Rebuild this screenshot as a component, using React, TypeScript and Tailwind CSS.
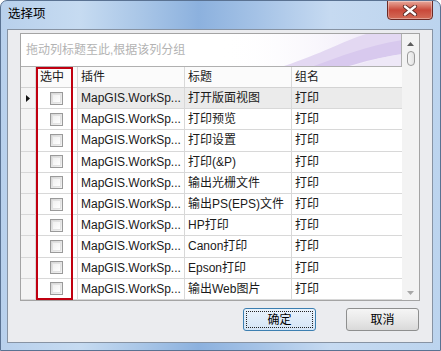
import React from "react";

const rows = [
  "打开版面视图",
  "打印预览",
  "打印设置",
  "打印(&P)",
  "输出光栅文件",
  "输出PS(EPS)文件",
  "HP打印",
  "Canon打印",
  "Epson打印",
  "输出Web图片",
];

const FONT = { fontFamily: "'Liberation Sans', 'Noto Sans CJK SC', sans-serif" };

function CheckBox() {
  return (
    <div className="w-[13px] h-[13px] border border-[#9a9a9a] bg-gradient-to-br from-[#d4d4d4] to-[#f4f4f4] flex items-center justify-center">
      <div className="w-[9px] h-[9px] bg-gradient-to-br from-[#f0f0f0] to-white border border-[#e2e2e2]" />
    </div>
  );
}

export default function App() {
  return (
    <div
      className="w-[441px] h-[351px] relative overflow-hidden rounded-t-[7px] border border-[#5a7292] flex flex-col text-[12px] text-[#1a1a1a]"
      style={{
        ...FONT,
        background:
          "linear-gradient(90deg, #b8d0ec 0%, #c6dbf1 18%, #a9c6e7 32%, #8cb1de 45%, #a4c2e6 58%, #c6daf1 75%, #bcd4ee 100%)",
      }}
    >
      {/* title bar */}
      <div className="h-[28px] flex items-center pl-[7px] pb-[1px] shrink-0">
        <span className="text-[12.5px] text-black leading-none">选择项</span>
      </div>
      {/* close button */}
      <div className="absolute top-[-1px] right-[7px] w-[46px] h-[20px] rounded-b-[4px] border border-[#6b2a25] bg-gradient-to-b from-[#e7a99d] via-[#c9483a] to-[#d36c58] flex items-center justify-center shadow-[inset_0_0_0_1px_rgba(255,255,255,0.35)]">
        <svg width="16" height="11" viewBox="0 0 16 11">
          <path d="M3 1.5 L13 9.5 M13 1.5 L3 9.5" stroke="#5a2a26" strokeWidth="4.2" strokeLinecap="round" />
          <path d="M3 1.5 L13 9.5 M13 1.5 L3 9.5" stroke="#ffffff" strokeWidth="2.4" strokeLinecap="round" />
        </svg>
      </div>

      {/* client area */}
      <div className="ml-[6px] mr-[7px] h-[314px] border border-[#8793a3] bg-[#ebecef] flex flex-col pt-[3px] px-[12px] shrink-0">
        {/* grid */}
        <div className="w-[400px] h-[268px] border border-[#a4a4a4] bg-white flex relative">
          <div className="w-[381px] flex flex-col relative">
            {/* group panel */}
            <div className="h-[33px] border-r border-b border-[#b0b0b0] relative overflow-hidden flex items-center pl-[5px] bg-white">
              <svg className="absolute left-0 top-0" width="381" height="33" viewBox="0 0 381 33">
                <defs>
                  <linearGradient id="g1" x1="0" y1="0" x2="1" y2="0">
                    <stop offset="0" stopColor="#ffffff" stopOpacity="0" />
                    <stop offset="1" stopColor="#e9e1f5" />
                  </linearGradient>
                </defs>
                <rect x="200" y="0" width="181" height="33" fill="url(#g1)" />
                <path d="M260 33 C300 20 320 8 345 0 L381 0 L381 10 C350 15 320 25 305 33 Z" fill="#e3d8f2" />
                <path d="M290 33 C320 22 345 12 381 6 L381 20 C360 23 340 28 325 33 Z" fill="#d8c9ee" />
                <path d="M330 33 C350 26 365 22 381 20 L381 33 Z" fill="#eee8f7" />
              </svg>
              <span className="relative text-[#b3b3b3] text-[12px]">拖动列标题至此,根据该列分组</span>
            </div>
            {/* header */}
            <div className="h-[21px] flex border-b border-[#d3d3d3] bg-[#fbfbfb]">
              <div className="w-[15px] border-r border-[#d8d8d8] bg-[#f4f4f4]" />
              <div className="w-[42px] border-r border-[#d8d8d8] pl-[4px] flex items-center">选中</div>
              <div className="w-[107px] border-r border-[#d8d8d8] pl-[3px] flex items-center">插件</div>
              <div className="w-[107px] border-r border-[#d8d8d8] pl-[3px] flex items-center">标题</div>
              <div className="w-[110px] pl-[3px] flex items-center">组名</div>
            </div>
            {/* rows */}
            {rows.map((t, i) => (
              <div
                key={i}
                className={`h-[21.2px] flex border-b border-[#d8d8d8] ${i === 0 ? "bg-[#ebebeb]" : "bg-white"}`}
              >
                <div className="w-[15px] border-r border-[#d8d8d8] bg-[#f4f4f4] flex items-center justify-center">
                  {i === 0 && (
                    <svg width="4" height="7" viewBox="0 0 4 7">
                      <path d="M0 0 L4 3.5 L0 7 Z" fill="#111" />
                    </svg>
                  )}
                </div>
                <div className="w-[42px] border-r border-[#d8d8d8] flex items-center justify-center bg-white">
                  <CheckBox />
                </div>
                <div className="w-[107px] border-r border-[#d8d8d8] pl-[3px] flex items-center whitespace-nowrap overflow-hidden">
                  MapGIS.WorkSp...
                </div>
                <div className="w-[107px] border-r border-[#d8d8d8] pl-[3px] flex items-center whitespace-nowrap overflow-hidden">
                  {t}
                </div>
                <div className="w-[110px] pl-[3px] flex items-center">打印</div>
              </div>
            ))}
            {/* red annotation box */}
            <div className="absolute left-[15px] top-[33px] w-[37px] h-[233px] border-2 border-[#c00010]" />
          </div>
          {/* scrollbar */}
          <div className="w-[17px] bg-[#f3f3f3] flex flex-col items-center">
            <div className="h-[17px] flex items-center justify-center mt-[1px]">
              <svg width="7" height="4" viewBox="0 0 7 4">
                <path d="M0 4 L3.5 0 L7 4 Z" fill="#5c5c5c" />
              </svg>
            </div>
            <div className="w-[8px] h-[15px] mt-[-1px] rounded-full border border-[#9a9a9a] bg-gradient-to-r from-[#f6f6f6] to-[#e2e2e2]" />
            <div className="flex-1" />
            <div className="h-[14px] flex items-center justify-center">
              <svg width="7" height="4" viewBox="0 0 7 4">
                <path d="M0 0 L7 0 L3.5 4 Z" fill="#a8a8a8" />
              </svg>
            </div>
          </div>
        </div>
        {/* buttons */}
        <div className="flex justify-end gap-[30px] mt-[7px] pr-[1px]">
          <div className="w-[73px] h-[23px] rounded-[3px] border border-[#3c7fb1] bg-gradient-to-b from-[#eaf3fc] to-[#d4e5f6] p-[2px]">
            <div className="w-full h-full border border-dotted border-[#222] flex items-center justify-center text-[12px] text-black">
              确定
            </div>
          </div>
          <div className="w-[73px] h-[23px] rounded-[3px] border border-[#8e8f8f] bg-gradient-to-b from-[#f5f5f5] via-[#e9e9e9] to-[#d9d9d9] flex items-center justify-center text-[12px] text-black">
            取消
          </div>
        </div>
      </div>
    </div>
  );
}
